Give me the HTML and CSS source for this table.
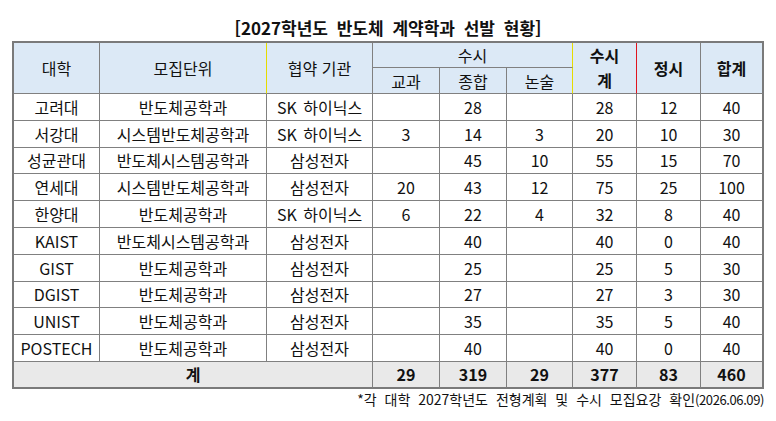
FILE: index.html
```html
<!DOCTYPE html>
<html lang="ko">
<head>
<meta charset="utf-8">
<link rel="stylesheet" href="styles.css">
</head>
<body>
<div class="page">
  <h1 class="title">[2027학년도 반도체 계약학과 선발 현황]</h1>
  <table class="grid">
    <colgroup>
      <col class="c-univ"><col class="c-unit"><col class="c-org">
      <col class="c-n"><col class="c-n"><col class="c-n2">
      <col class="c-m"><col class="c-m"><col class="c-last">
    </colgroup>
    <thead>
      <tr class="h1">
        <th rowspan="2">대학</th>
        <th rowspan="2" class="mark-y">모집단위</th>
        <th rowspan="2">협약 기관</th>
        <th colspan="3" class="mark-y">수시</th>
        <th rowspan="2" class="strong mark-r two-line">수시<br>계</th>
        <th rowspan="2" class="strong">정시</th>
        <th rowspan="2" class="strong">합계</th>
      </tr>
      <tr class="h2">
        <th>교과</th>
        <th>종합</th>
        <th class="mark-y">논술</th>
      </tr>
    </thead>
    <tbody>
      <tr><td>고려대</td><td>반도체공학과</td><td>SK 하이닉스</td><td></td><td>28</td><td></td><td>28</td><td>12</td><td>40</td></tr>
      <tr><td>서강대</td><td>시스템반도체공학과</td><td>SK 하이닉스</td><td>3</td><td>14</td><td>3</td><td>20</td><td>10</td><td>30</td></tr>
      <tr><td>성균관대</td><td>반도체시스템공학과</td><td>삼성전자</td><td></td><td>45</td><td>10</td><td>55</td><td>15</td><td>70</td></tr>
      <tr><td>연세대</td><td>시스템반도체공학과</td><td>삼성전자</td><td>20</td><td>43</td><td>12</td><td>75</td><td>25</td><td>100</td></tr>
      <tr><td>한양대</td><td>반도체공학과</td><td>SK 하이닉스</td><td>6</td><td>22</td><td>4</td><td>32</td><td>8</td><td>40</td></tr>
      <tr><td>KAIST</td><td>반도체시스템공학과</td><td>삼성전자</td><td></td><td>40</td><td></td><td>40</td><td>0</td><td>40</td></tr>
      <tr><td>GIST</td><td>반도체공학과</td><td>삼성전자</td><td></td><td>25</td><td></td><td>25</td><td>5</td><td>30</td></tr>
      <tr><td>DGIST</td><td>반도체공학과</td><td>삼성전자</td><td></td><td>27</td><td></td><td>27</td><td>3</td><td>30</td></tr>
      <tr><td>UNIST</td><td>반도체공학과</td><td>삼성전자</td><td></td><td>35</td><td></td><td>35</td><td>5</td><td>40</td></tr>
      <tr><td>POSTECH</td><td>반도체공학과</td><td>삼성전자</td><td></td><td>40</td><td></td><td>40</td><td>0</td><td>40</td></tr>
    </tbody>
    <tfoot>
      <tr class="total"><td colspan="3">계</td><td>29</td><td>319</td><td>29</td><td>377</td><td>83</td><td>460</td></tr>
    </tfoot>
  </table>
  <p class="note">*각 대학 2027학년도 전형계획 및 수시 모집요강 확인<span class="date">(2026.06.09)</span></p>
</div>
</body>
</html>
```

FILE: styles.css
```css
html, body {
  margin: 0;
  padding: 0;
  background: #ffffff;
}

body {
  font-family: "Noto Sans CJK KR", "Noto Sans", sans-serif;
  color: #111111;
}

.page {
  width: 752px;
  padding: 0 0 0 12px;
}

.title {
  margin: 0;
  padding-top: 17px;
  height: 24px;
  font-size: 17px;
  line-height: 22px;
  font-weight: 700;
  text-align: center;
  word-spacing: 4px;
  color: #111;
}

.grid {
  width: 752px;
  table-layout: fixed;
  border-collapse: separate;
  border-spacing: 0;
  border-top: 2px solid #7a7a7a;
  border-left: 2px solid #7a7a7a;
}

.c-univ { width: 86px; }
.c-unit { width: 167px; }
.c-org { width: 106px; }
.c-n { width: 67px; }
.c-n2 { width: 66px; }
.c-m { width: 64px; }
.c-last { width: 63px; }

.grid th,
.grid td {
  padding: 0;
  border-right: 1px solid #808080;
  border-bottom: 1px solid #808080;
  text-align: center;
  vertical-align: middle;
  font-size: 16px;
  line-height: 18px;
  white-space: nowrap;
  overflow: hidden;
}

.grid tr > *:last-child {
  border-right: 2px solid #7a7a7a;
}

.grid tr.h2 > *:last-child {
  border-right: 1px solid #808080;
}

.grid th {
  background: #dce9f6;
  font-weight: 400;
}

.grid th.strong {
  font-weight: 700;
}

.grid th.two-line {
  line-height: 25px;
}

.grid th.mark-y {
  border-right-color: #e6dc00;
}

.grid th.mark-r {
  border-right-color: #e0141e;
}

.grid tr.h2 th.mark-y {
  border-right-color: #e6dc00;
}

.h1 { height: 25px; }
.h2 { height: 26px; }

.grid tbody tr { height: 26.8px; }

.grid td { word-spacing: 2px; }

.total td {
  background: #e9e9e9;
  font-weight: 700;
  height: 25px;
  border-bottom: 2px solid #7a7a7a;
}

.note {
  margin: 1px 0 0 0;
  text-align: right;
  font-size: 14px;
  line-height: 19px;
  word-spacing: 4px;
  color: #111;
}

.note .date {
  font-size: 13px;
  letter-spacing: -0.4px;
}
```
